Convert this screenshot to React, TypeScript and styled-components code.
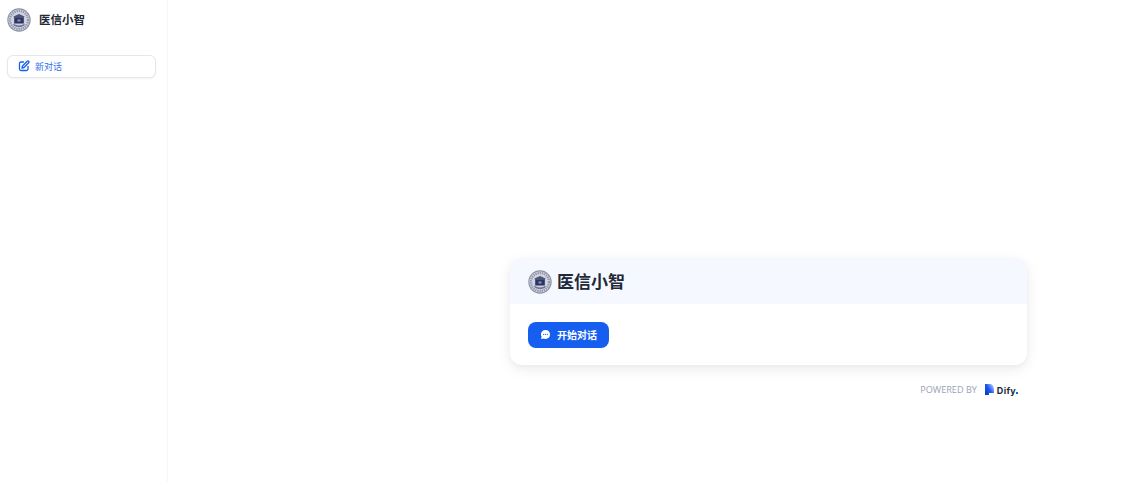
import React from 'react';
import styled, { createGlobalStyle } from 'styled-components';

const GlobalStyle = createGlobalStyle`
  html, body {
    margin: 0;
    padding: 0;
    height: 100%;
    background: #fff;
    font-family: Inter, "Noto Sans CJK SC", "Liberation Sans", sans-serif;
  }
  #root {
    height: 100%;
  }
`;

const Page = styled.div`
  display: flex;
  width: 1148px;
  height: 482px;
  overflow: hidden;
  background: #fff;
`;

const Sidebar = styled.aside`
  width: 168px;
  flex-shrink: 0;
  box-sizing: border-box;
  border-right: 1px solid #f5f6f8;
  background: #fff;
  display: flex;
  flex-direction: column;
`;

const Brand = styled.div`
  display: flex;
  align-items: center;
  gap: 8px;
  height: 40px;
  padding-left: 7px;
`;

const BrandName = styled.div`
  font-size: 11.5px;
  line-height: 16px;
  font-weight: 600;
  color: #1f2937;
`;

const NewChatButton = styled.button`
  display: flex;
  align-items: center;
  gap: 5px;
  box-sizing: border-box;
  width: 149px;
  height: 23px;
  margin: 15px 0 0 7px;
  padding: 0 0 1px 10px;
  background: #fff;
  border: 1px solid #e5e7eb;
  border-radius: 6px;
  box-shadow: 0 1px 2px rgba(16, 24, 40, 0.05);
  color: #2f6ff0;
  font: inherit;
  font-size: 9px;
  cursor: pointer;
`;

const Main = styled.main`
  flex: 1;
  display: flex;
  flex-direction: column;
  align-items: flex-end;
  padding: 258px 121px 0 0;
`;

const Card = styled.section`
  width: 517px;
  height: 107px;
  border-radius: 12px;
  background: #fff;
  overflow: hidden;
  box-shadow: 0 4px 14px rgba(16, 24, 40, 0.08), 0 2px 4px rgba(16, 24, 40, 0.03);
`;

const CardHeader = styled.header`
  display: flex;
  align-items: center;
  gap: 5px;
  height: 46px;
  padding: 1px 0 0 18px;
  box-sizing: border-box;
  background: #f5f8ff;
`;

const CardTitle = styled.h1`
  margin: 0;
  font-size: 17px;
  line-height: 24px;
  font-weight: 600;
  color: #1f2937;
`;

const CardBody = styled.div`
  padding: 18px;
`;

const StartButton = styled.button`
  display: flex;
  align-items: center;
  gap: 6px;
  box-sizing: border-box;
  width: 81px;
  height: 26px;
  padding: 0 0 2px 12px;
  border: none;
  border-radius: 8px;
  background: #155eef;
  color: #fff;
  font: inherit;
  font-size: 10px;
  font-weight: 600;
  cursor: pointer;
`;

const Footer = styled.footer`
  display: flex;
  align-items: center;
  height: 16px;
  margin: 16px 9px 0 0;
  color: #98a2b3;
  font-size: 9.1px;
  font-weight: 400;
  font-family: "Open Sans", "Liberation Sans", sans-serif;
`;

const DifyMark = styled.div`
  display: flex;
  align-items: center;
  gap: 3px;
  margin-left: 8px;
`;

const DifyWord = styled.span`
  position: relative;
  top: 1px;
  font-family: Inter, "Liberation Sans", sans-serif;
  font-size: 9px;
  font-weight: 700;
  letter-spacing: 0.3px;
  color: #1d2939;
`;

const Dot = styled.span`
  width: 2px;
  height: 2px;
  margin: 8px 0 0 -3px;
  background: #155eef;
`;

const Seal = ({ size }: { size: number }) => (
  <svg width={size} height={size} viewBox="0 0 24 24">
    <circle cx="12" cy="12" r="11.7" fill="#8a8fa6" />
    <circle cx="12" cy="12" r="10.6" fill="#d9dbe5" />
    <circle cx="12" cy="12" r="9" fill="none" stroke="#9397ad" strokeWidth="2.4" strokeDasharray="1.4 0.8" />
    <circle cx="12" cy="12" r="7" fill="#cfd1de" />
    <path d="M12 6 L17.5 8.6 L16.8 10 H7.2 L6.5 8.6 Z" fill="#4b5378" />
    <rect x="7.2" y="10" width="9.6" height="5.5" fill="#2c3566" />
    <path d="M6 15.6 Q12 19.4 18 15.6 L17 17.8 Q12 20.5 7 17.8 Z" fill="#6d7390" />
    <rect x="10.5" y="11.5" width="3" height="2" fill="#8f94b5" />
  </svg>
);

const PencilIcon = () => (
  <svg width="12" height="12" viewBox="0 0 24 24" fill="none" stroke="#155eef" strokeWidth="2.6" strokeLinecap="round" strokeLinejoin="round">
    <path d="M11 4H6a3 3 0 0 0-3 3v11a3 3 0 0 0 3 3h11a3 3 0 0 0 3-3v-5" />
    <path d="M18.4 2.6a2.1 2.1 0 0 1 3 3L12 15l-4 1 1-4z" />
  </svg>
);

const ChatIcon = () => (
  <svg width="11" height="11" viewBox="0 0 24 24">
    <path d="M12 2C6.2 2 2 6.2 2 11.5c0 1.9.5 3.6 1.5 5.1L2.4 21c-.1.5.3.9.8.8l4.5-1.1c1.3.6 2.8.9 4.3.9 5.8 0 10-4 10-9.6S17.8 2 12 2z" fill="#fff" />
    <circle cx="8" cy="11.6" r="1.4" fill="#155eef" />
    <circle cx="12" cy="11.6" r="1.4" fill="#155eef" />
    <circle cx="16" cy="11.6" r="1.4" fill="#155eef" />
  </svg>
);

const DifyLogo = () => (
  <svg width="9" height="11" viewBox="0 0 9 11">
    <defs>
      <linearGradient id="difyGrad" x1="0" y1="1" x2="1" y2="0.2">
        <stop offset="0" stopColor="#0033cc" />
        <stop offset="0.55" stopColor="#1f5cf0" />
        <stop offset="1" stopColor="#b5caff" />
      </linearGradient>
    </defs>
    <path d="M0 0H4.5C7 0 9 2 9 5.5V9H4V11H0Z" fill="url(#difyGrad)" />
  </svg>
);

const App: React.FC = () => {
  return (
    <>
      <GlobalStyle />
      <Page>
        <Sidebar>
          <Brand>
            <Seal size={24} />
            <BrandName>医信小智</BrandName>
          </Brand>
          <NewChatButton>
            <PencilIcon />
            新对话
          </NewChatButton>
        </Sidebar>
        <Main>
          <Card>
            <CardHeader>
              <Seal size={24} />
              <CardTitle>医信小智</CardTitle>
            </CardHeader>
            <CardBody>
              <StartButton>
                <ChatIcon />
                开始对话
              </StartButton>
            </CardBody>
          </Card>
          <Footer>
            POWERED BY
            <DifyMark>
              <DifyLogo />
              <DifyWord>Dify</DifyWord>
              <Dot />
            </DifyMark>
          </Footer>
        </Main>
      </Page>
    </>
  );
};

export default App;
